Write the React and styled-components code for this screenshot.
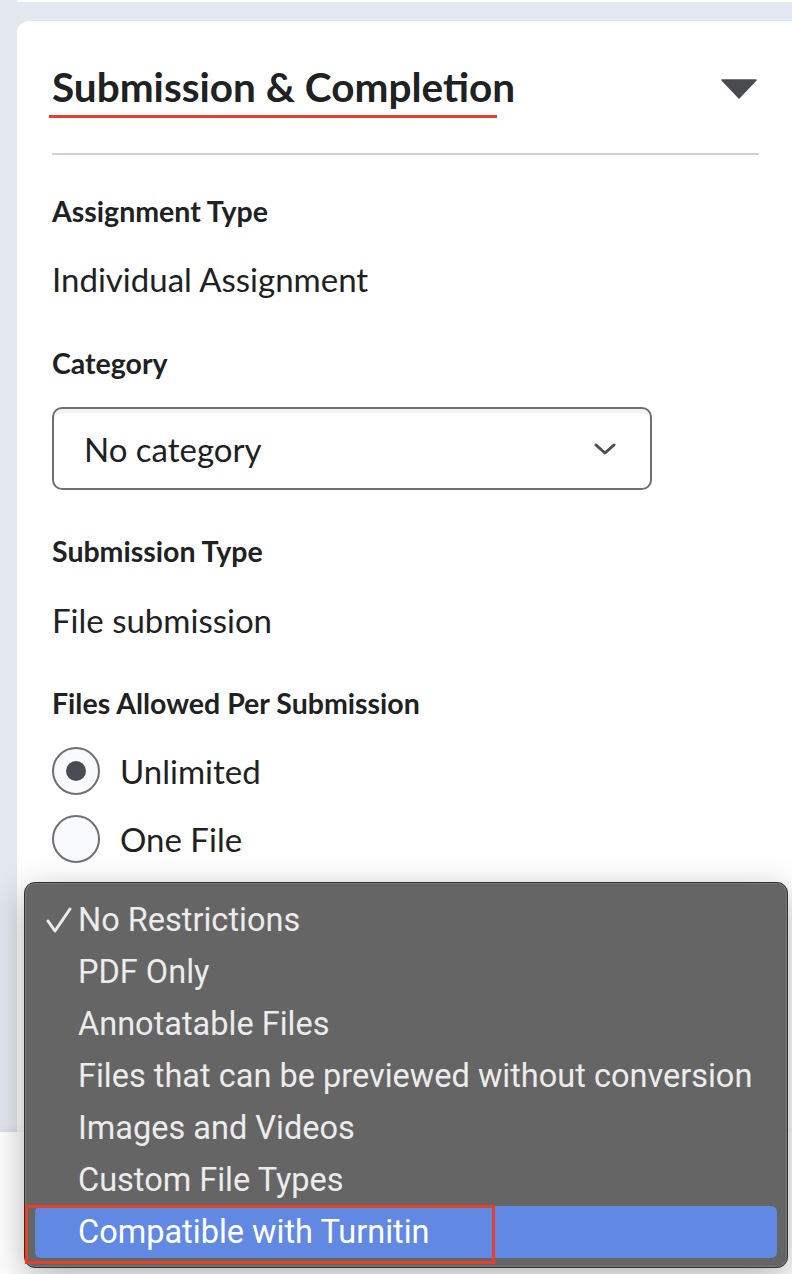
import React from 'react';
import styled, { createGlobalStyle } from 'styled-components';

const Global = createGlobalStyle`
  html, body {
    margin: 0;
    padding: 0;
    background: #e3e7ef;
    overflow: hidden;
  }
  body {
    font-family: Lato, "Liberation Sans", sans-serif;
    color: #202122;
  }
`;

const Page = styled.div`
  position: relative;
  width: 792px;
  height: 1274px;
  overflow: hidden;
  padding-top: 1px;
  box-sizing: border-box;
`;

const TopCard = styled.div`
  height: 2px;
  margin: -1px -12px 0 17px;
  background: #fff;
  border-radius: 0 0 12px 12px;
`;

const Card = styled.div`
  margin: 19px -12px 0 17px;
  height: 1200px;
  background: #fff;
  border-radius: 12px;
  padding: 0 45px 0 35px;
`;

const Header = styled.div`
  display: flex;
  align-items: flex-start;
  justify-content: space-between;
  padding: 42px 0 42px;
  border-bottom: 2px solid #cdd3dc;
`;

const Title = styled.h2`
  margin: 0;
  font-size: 40.5px;
  font-weight: 700;
  line-height: 48px;
  color: #202122;
  display: inline-block;
  position: relative;
  &:after {
    content: '';
    position: absolute;
    left: -3px;
    right: 18px;
    bottom: -7px;
    height: 3px;
    background: #e6402a;
  }
`;

const Toggle = styled.svg`
  margin-top: 16px;
  margin-right: 2px;
`;

const Section = styled.div`
  padding-top: ${p => p.$top || 42}px;
`;

const Label = styled.div`
  font-size: 28.5px;
  font-weight: 700;
  line-height: 30px;
  color: #202122;
`;

const Value = styled.div`
  margin-top: ${p => p.$gap || 35}px;
  font-size: 33px;
  line-height: 36px;
  color: #202122;
`;

const Select = styled.div`
  margin-top: 29px;
  width: 600px;
  height: 83px;
  box-sizing: border-box;
  border: 2px solid #6e7074;
  border-radius: 10px;
  display: flex;
  align-items: center;
  justify-content: space-between;
  padding: 0 34px 0 30px;
  font-size: 33px;
  color: #202122;
  box-shadow: inset 0 4px 0 #f3f4f6;
`;

const RadioList = styled.div`
  margin-top: 29px;
  display: flex;
  flex-direction: column;
  gap: 20px;
`;

const RadioRow = styled.div`
  display: flex;
  align-items: center;
  gap: 20px;
  font-size: 33px;
  color: #202122;
`;

const Circle = styled.span`
  width: 48px;
  height: 48px;
  box-sizing: border-box;
  border: 2px solid #6e7074;
  border-radius: 50%;
  background: #f9fafe;
  display: flex;
  align-items: center;
  justify-content: center;
  &:after {
    content: '';
    width: 20px;
    height: 20px;
    border-radius: 50%;
    background: ${p => (p.$on ? '#494c52' : 'transparent')};
  }
`;

const Footer = styled.div`
  position: absolute;
  left: 0;
  right: 0;
  top: 1132px;
  bottom: 0;
  background: #fff;
  box-shadow: 0 -2px 6px rgba(0, 0, 0, 0.06);
`;

const Menu = styled.div`
  position: absolute;
  left: 24px;
  top: 882px;
  width: 764px;
  height: 386px;
  box-sizing: border-box;
  padding: 11px 10px;
  background: #656565;
  border: 1px solid #2e2e2e;
  border-radius: 11px;
  box-shadow: inset 0 0 0 1px rgba(255, 255, 255, 0.14), 0 10px 36px rgba(0, 0, 0, 0.3);
  font-family: Roboto, "Liberation Sans", sans-serif;
`;

const Item = styled.div`
  height: 52px;
  display: grid;
  grid-template-columns: 43px 1fr;
  align-items: center;
  font-size: 32.5px;
  color: ${p => (p.$active ? '#ffffff' : '#ececec')};
  background: ${p => (p.$active ? '#6189e4' : 'transparent')};
  border-radius: 6px;
`;

const Check = styled.span`
  padding-left: 11px;
  display: flex;
  align-items: center;
`;

const Mark = styled.div`
  position: absolute;
  left: 25px;
  top: 1205px;
  width: 470px;
  height: 59px;
  box-sizing: border-box;
  border: 3px solid #e5402a;
`;

const options = [
  'No Restrictions',
  'PDF Only',
  'Annotatable Files',
  'Files that can be previewed without conversion',
  'Images and Videos',
  'Custom File Types',
  'Compatible with Turnitin',
];

export default function App() {
  return (
    <Page>
      <Global />
      <TopCard />
      <Card>
        <Header>
          <Title>Submission &amp; Completion</Title>
          <Toggle width="36" height="20" viewBox="0 0 36 20">
            <path d="M1 1 L35 1 L18 19 Z" fill="#4a4b4f" stroke="#4a4b4f" strokeWidth="1.5" strokeLinejoin="round" />
          </Toggle>
        </Header>

        <Section $top={41}>
          <Label>Assignment Type</Label>
          <Value>Individual Assignment</Value>
        </Section>

        <Section $top={51}>
          <Label>Category</Label>
          <Select>
            <span>No category</span>
            <svg width="22" height="14" viewBox="0 0 22 14">
              <path d="M2 3 L11 11 L20 3" fill="none" stroke="#494c52" strokeWidth="3" strokeLinecap="round" strokeLinejoin="round" />
            </svg>
          </Select>
        </Section>

        <Section $top={46}>
          <Label>Submission Type</Label>
          <Value $gap={36}>File submission</Value>
        </Section>

        <Section $top={50}>
          <Label>Files Allowed Per Submission</Label>
          <RadioList>
            <RadioRow>
              <Circle $on />
              Unlimited
            </RadioRow>
            <RadioRow>
              <Circle />
              One File
            </RadioRow>
          </RadioList>
        </Section>
      </Card>

      <Footer />

      <Menu>
        {options.map((o, i) => (
          <Item key={o} $active={i === options.length - 1}>
            <Check>
              {i === 0 && (
                <svg width="26" height="26" viewBox="0 0 26 26">
                  <path d="M2 14 L9 24 L24 2" fill="none" stroke="#ececec" strokeWidth="3" strokeLinecap="round" strokeLinejoin="round" />
                </svg>
              )}
            </Check>
            <span>{o}</span>
          </Item>
        ))}
      </Menu>
      <Mark />
    </Page>
  );
}
